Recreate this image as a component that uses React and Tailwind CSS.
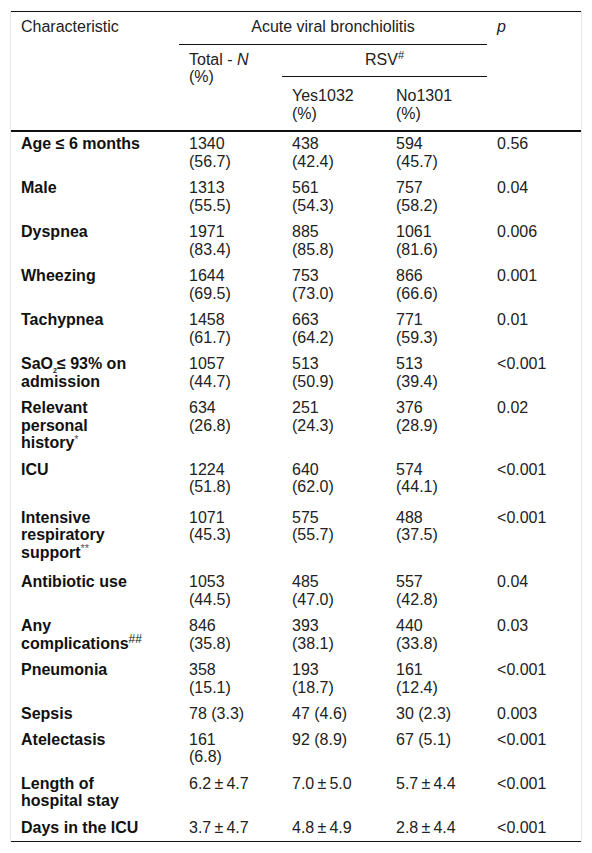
import React from "react";

const thin = "\u2009";

function Lines({ items }) {
  return items.map((t, i) => (
    <React.Fragment key={i}>
      {i > 0 && <br />}
      {t}
    </React.Fragment>
  ));
}

const rows = [
  { label: ["Age ≤ 6 months"], total: ["1340", "(56.7)"], yes: ["438", "(42.4)"], no: ["594", "(45.7)"], p: "0.56" },
  { label: ["Male"], total: ["1313", "(55.5)"], yes: ["561", "(54.3)"], no: ["757", "(58.2)"], p: "0.04" },
  { label: ["Dyspnea"], total: ["1971", "(83.4)"], yes: ["885", "(85.8)"], no: ["1061", "(81.6)"], p: "0.006" },
  { label: ["Wheezing"], total: ["1644", "(69.5)"], yes: ["753", "(73.0)"], no: ["866", "(66.6)"], p: "0.001" },
  { label: ["Tachypnea"], total: ["1458", "(61.7)"], yes: ["663", "(64.2)"], no: ["771", "(59.3)"], p: "0.01" },
  {
    label: [
      <span key="s">
        SaO
        <span className="relative top-[4px] text-[7px] leading-none">2</span>≤ 93% on
      </span>,
      "admission",
    ],
    total: ["1057", "(44.7)"],
    yes: ["513", "(50.9)"],
    no: ["513", "(39.4)"],
    p: "<0.001",
  },
  {
    label: [
      "Relevant",
      "personal",
      <span key="h">
        history<sup className="text-[11px] font-normal text-[#555]">*</sup>
      </span>,
    ],
    total: ["634", "(26.8)"],
    yes: ["251", "(24.3)"],
    no: ["376", "(28.9)"],
    p: "0.02",
  },
  { label: ["ICU"], total: ["1224", "(51.8)"], yes: ["640", "(62.0)"], no: ["574", "(44.1)"], p: "<0.001", pb: "pb-[10px]" },
  {
    label: [
      "Intensive",
      "respiratory",
      <span key="h">
        support<sup className="text-[11px] font-normal text-[#555]">**</sup>
      </span>,
    ],
    total: ["1071", "(45.3)"],
    yes: ["575", "(55.7)"],
    no: ["488", "(37.5)"],
    p: "<0.001",
    pb: "pb-[9px]",
  },
  { label: ["Antibiotic use"], total: ["1053", "(44.5)"], yes: ["485", "(47.0)"], no: ["557", "(42.8)"], p: "0.04" },
  {
    label: [
      "Any",
      <span key="c">
        complications<sup className="text-[12px] font-normal text-[#111]">##</sup>
      </span>,
    ],
    total: ["846", "(35.8)"],
    yes: ["393", "(38.1)"],
    no: ["440", "(33.8)"],
    p: "0.03",
  },
  { label: ["Pneumonia"], total: ["358", "(15.1)"], yes: ["193", "(18.7)"], no: ["161", "(12.4)"], p: "<0.001" },
  { label: ["Sepsis"], total: ["78 (3.3)"], yes: ["47 (4.6)"], no: ["30 (2.3)"], p: "0.003", pb: "pb-[5px]" },
  { label: ["Atelectasis"], total: ["161", "(6.8)"], yes: ["92 (8.9)"], no: ["67 (5.1)"], p: "<0.001" },
  {
    label: ["Length of", "hospital stay"],
    total: [`6.2${thin}±${thin}4.7`],
    yes: [`7.0${thin}±${thin}5.0`],
    no: [`5.7${thin}±${thin}4.4`],
    p: "<0.001",
  },
  {
    label: ["Days in the ICU"],
    total: [`3.7${thin}±${thin}4.7`],
    yes: [`4.8${thin}±${thin}4.9`],
    no: [`2.8${thin}±${thin}4.4`],
    p: "<0.001",
    pb: "pb-[5px]",
  },
];

const base = "align-top pl-[10px] pr-0 pt-[3px] text-left whitespace-nowrap";

export default function App() {
  return (
    <div
      className="min-h-[853px] bg-white px-[10px] pt-[11px]"
      style={{ fontFamily: '"Liberation Sans", Arial, sans-serif' }}
    >
      <div className="border-x border-[#e6e6e6]">
        <table className="w-full table-fixed border-collapse border-y border-[#111] text-[16px] leading-[17.5px] text-[#222]">
          <colgroup>
            <col className="w-[168px]" />
            <col className="w-[103px]" />
            <col className="w-[104px]" />
            <col className="w-[101px]" />
            <col />
          </colgroup>
          <thead className="border-b-2 border-[#111]">
            <tr>
              <th rowSpan={3} className="align-top pl-[10px] pt-[6px] text-left font-normal">
                Characteristic
              </th>
              <th colSpan={3} className="border-b border-[#111] pt-[6px] pb-[8px] text-center font-normal">
                Acute viral bronchiolitis
              </th>
              <th rowSpan={3} className="align-top pl-[10px] pt-[6px] text-left font-normal italic">
                p
              </th>
            </tr>
            <tr>
              <th rowSpan={2} className="align-top pl-[10px] pt-[6px] text-left font-normal">
                Total - <i>N</i>
                <br />
                (%)
              </th>
              <th colSpan={2} className="border-b border-[#111] pt-[6px] pb-[8px] text-center font-normal">
                RSV<sup className="text-[11px]">#</sup>
              </th>
            </tr>
            <tr>
              <th className="align-top pl-[10px] pt-[10px] pb-[8px] text-left font-normal">
                Yes1032
                <br />
                (%)
              </th>
              <th className="align-top pl-[10px] pt-[10px] pb-[8px] text-left font-normal">
                No1301
                <br />
                (%)
              </th>
            </tr>
          </thead>
          <tbody>
            {rows.map((r, i) => {
              const td = `${base} ${r.pb || "pb-[6px]"}`;
              return (
                <tr key={i}>
                  <td className={`${td} font-bold text-[#111]`}>
                    <Lines items={r.label} />
                  </td>
                  <td className={td}>
                    <Lines items={r.total} />
                  </td>
                  <td className={td}>
                    <Lines items={r.yes} />
                  </td>
                  <td className={td}>
                    <Lines items={r.no} />
                  </td>
                  <td className={td}>{r.p}</td>
                </tr>
              );
            })}
          </tbody>
        </table>
      </div>
    </div>
  );
}
